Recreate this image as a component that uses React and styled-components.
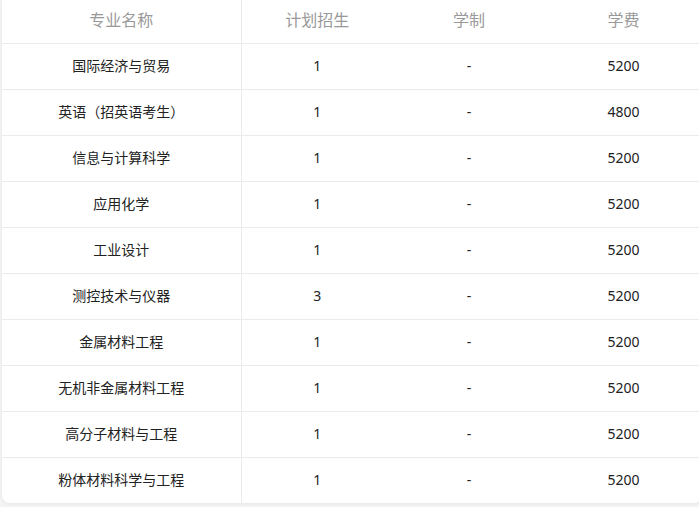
import React from "react";
import styled, { createGlobalStyle } from "styled-components";

const Global = createGlobalStyle`
  html, body { margin: 0; padding: 0; background: #f4f4f4; }
  body { font-family: "Noto Sans", "Noto Sans CJK SC", sans-serif; }
`;

const Page = styled.div`
  padding: 0 0 4px 2px;
  overflow: hidden;
  height: 507px;
  box-sizing: border-box;
`;

const Card = styled.div`
  width: 700px;
  background: #fff;
  border-radius: 0 0 8px 8px;
  box-shadow: 0 1px 4px rgba(0, 0, 0, 0.06);
  overflow: hidden;
`;

const Table = styled.table`
  width: 100%;
  border-collapse: collapse;
  table-layout: fixed;
`;

const Th = styled.th`
  height: 40px;
  padding: 0 0 3px;
  font-weight: 400;
  font-size: 16px;
  line-height: 20px;
  color: #999;
  text-align: center;
  border-bottom: 1px solid #ebebeb;
  border-right: ${(p) => (p.$divider ? "1px solid #ebebeb" : "none")};
`;

const Td = styled.td`
  height: 44px;
  padding: 0 0 1px;
  font-size: 14px;
  line-height: 18px;
  color: #222;
  text-align: center;
  border-bottom: ${(p) => (p.$last ? "none" : "1px solid #ebebeb")};
  border-right: ${(p) => (p.$divider ? "1px solid #ebebeb" : "none")};
`;

const rows = [
  ["国际经济与贸易", "1", "-", "5200"],
  ["英语（招英语考生）", "1", "-", "4800"],
  ["信息与计算科学", "1", "-", "5200"],
  ["应用化学", "1", "-", "5200"],
  ["工业设计", "1", "-", "5200"],
  ["测控技术与仪器", "3", "-", "5200"],
  ["金属材料工程", "1", "-", "5200"],
  ["无机非金属材料工程", "1", "-", "5200"],
  ["高分子材料与工程", "1", "-", "5200"],
  ["粉体材料科学与工程", "1", "-", "5200"],
];

export default function App() {
  return (
    <>
      <Global />
      <Page>
        <Card>
          <Table>
            <colgroup>
              <col style={{ width: 239 }} />
              <col style={{ width: 152 }} />
              <col style={{ width: 152 }} />
              <col style={{ width: 157 }} />
            </colgroup>
            <thead>
              <tr>
                <Th $divider>专业名称</Th>
                <Th>计划招生</Th>
                <Th>学制</Th>
                <Th>学费</Th>
              </tr>
            </thead>
            <tbody>
              {rows.map((r, i) => (
                <tr key={i}>
                  <Td $divider $last={i === rows.length - 1}>{r[0]}</Td>
                  <Td $last={i === rows.length - 1}>{r[1]}</Td>
                  <Td $last={i === rows.length - 1}>{r[2]}</Td>
                  <Td $last={i === rows.length - 1}>{r[3]}</Td>
                </tr>
              ))}
            </tbody>
          </Table>
        </Card>
      </Page>
    </>
  );
}
